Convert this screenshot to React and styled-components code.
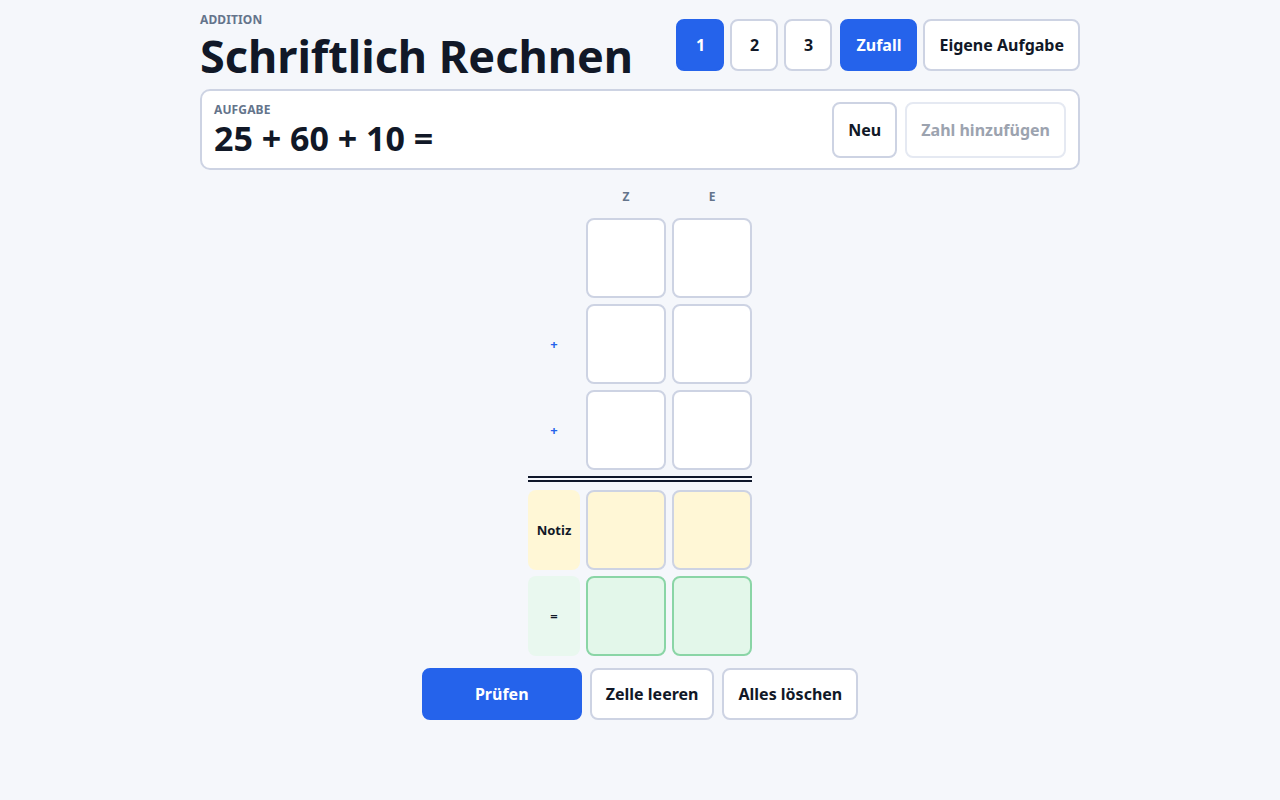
import React from 'react'
import styled, { createGlobalStyle } from 'styled-components'

const GlobalStyle = createGlobalStyle`
  * { box-sizing: border-box; }
  body {
    margin: 0;
    background: #f5f7fb;
    font-family: "Noto Sans", "Open Sans", sans-serif;
    color: #111827;
  }
`

const StyledPage = styled.div`
  width: 880px;
  margin: 0 auto;
  padding-top: 12px;
`

const StyledHeader = styled.header`
  display: flex;
  justify-content: space-between;
  align-items: flex-start;
`

const StyledEyebrow = styled.div`
  font-size: 12px;
  font-weight: 700;
  letter-spacing: 0.01em;
  color: #64748b;
  line-height: 16px;
`

const StyledTitle = styled.h1`
  margin: 0;
  font-size: 45px;
  font-weight: 700;
  line-height: 56px;
  color: #111827;
`

const StyledToolbar = styled.div`
  display: flex;
  gap: 8px;
  margin-top: 7px;
`

const StyledGroup = styled.div`
  display: flex;
  gap: 6px;
`

const StyledButton = styled.button`
  height: ${p => (p.$tall ? 56 : 52)}px;
  min-width: ${p => (p.$square ? '48px' : 'auto')};
  width: ${p => (p.$block ? '160px' : 'auto')};
  padding: 0 ${p => (p.$square ? 0 : 14)}px;
  border-radius: 8px;
  border: 2px solid ${p => (p.$primary ? '#2563eb' : p.$disabled ? '#e5e9f2' : '#cdd3e3')};
  background: ${p => (p.$primary ? '#2563eb' : '#fff')};
  color: ${p => (p.$primary ? '#fff' : p.$disabled ? '#9ca3af' : '#111827')};
  font-family: inherit;
  font-size: 16px;
  font-weight: 700;
  cursor: ${p => (p.$disabled ? 'default' : 'pointer')};
`

const StyledTask = styled.section`
  margin-top: 5px;
  height: 81px;
  display: flex;
  align-items: center;
  justify-content: space-between;
  padding: 0 12px;
  background: #fff;
  border: 2px solid #cdd3e3;
  border-radius: 10px;
`

const StyledExpression = styled.div`
  font-size: 34px;
  font-weight: 700;
  line-height: 40px;
  color: #111827;
`

const StyledActions = styled.div`
  display: flex;
  gap: 8px;
`

const StyledBoard = styled.div`
  margin-top: 18px;
  display: grid;
  grid-template-columns: 52px 80px 80px;
  grid-template-rows: 24px 80px 80px 80px 8px 80px 80px;
  gap: 6px;
  justify-content: center;
`

const StyledColLabel = styled.div`
  text-align: center;
  line-height: 18px;
  font-size: 12px;
  font-weight: 700;
  color: #64748b;
`

const StyledOp = styled.div`
  display: flex;
  align-items: center;
  justify-content: center;
  border-radius: 8px;
  font-size: 13px;
  font-weight: 700;
  color: ${p => (p.$tone ? '#111827' : '#2563eb')};
  background: ${p => (p.$tone === 'note' ? '#fff7d6' : p.$tone === 'result' ? '#e9f8ef' : 'transparent')};
`

const StyledCell = styled.div`
  border-radius: 8px;
  border: 2px solid ${p => (p.$tone === 'result' ? '#8ad5a6' : '#cdd3e3')};
  background: ${p => (p.$tone === 'note' ? '#fff7d6' : p.$tone === 'result' ? '#e3f7ea' : '#fff')};
`

const StyledRule = styled.div`
  grid-column: 1 / -1;
  border-top: 6px double #0f172a;
`

const StyledFooter = styled.div`
  margin-top: 12px;
  display: flex;
  justify-content: center;
  gap: 8px;
`

const addends = ['', '+', '+']

const App = () => (
  <>
    <GlobalStyle />
    <StyledPage>
      <StyledHeader>
        <div>
          <StyledEyebrow>ADDITION</StyledEyebrow>
          <StyledTitle>Schriftlich Rechnen</StyledTitle>
        </div>
        <StyledToolbar>
          <StyledGroup>
            <StyledButton $square $primary>1</StyledButton>
            <StyledButton $square>2</StyledButton>
            <StyledButton $square>3</StyledButton>
          </StyledGroup>
          <StyledGroup>
            <StyledButton $primary>Zufall</StyledButton>
            <StyledButton>Eigene Aufgabe</StyledButton>
          </StyledGroup>
        </StyledToolbar>
      </StyledHeader>

      <StyledTask>
        <div>
          <StyledEyebrow>AUFGABE</StyledEyebrow>
          <StyledExpression>25 + 60 + 10 =</StyledExpression>
        </div>
        <StyledActions>
          <StyledButton $tall>Neu</StyledButton>
          <StyledButton $tall $disabled>Zahl hinzufügen</StyledButton>
        </StyledActions>
      </StyledTask>

      <StyledBoard>
        <span />
        <StyledColLabel>Z</StyledColLabel>
        <StyledColLabel>E</StyledColLabel>
        {addends.map((op, i) => (
          <React.Fragment key={i}>
            <StyledOp>{op}</StyledOp>
            <StyledCell />
            <StyledCell />
          </React.Fragment>
        ))}
        <StyledRule />
        <StyledOp $tone="note">Notiz</StyledOp>
        <StyledCell $tone="note" />
        <StyledCell $tone="note" />
        <StyledOp $tone="result">=</StyledOp>
        <StyledCell $tone="result" />
        <StyledCell $tone="result" />
      </StyledBoard>

      <StyledFooter>
        <StyledButton $primary $block>Prüfen</StyledButton>
        <StyledButton>Zelle leeren</StyledButton>
        <StyledButton>Alles löschen</StyledButton>
      </StyledFooter>
    </StyledPage>
  </>
)

export default App
